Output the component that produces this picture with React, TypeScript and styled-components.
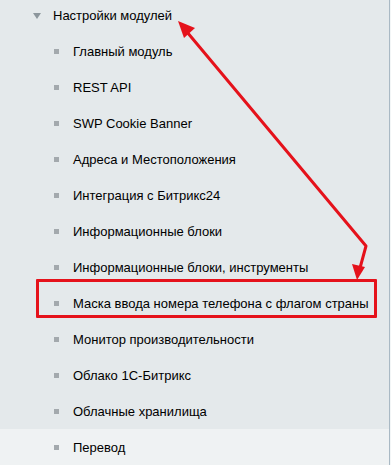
import React from "react";
import styled, { createGlobalStyle, css } from "styled-components";

const GlobalStyle = createGlobalStyle`
  html, body {
    margin: 0;
    padding: 0;
    background: #f3f6f7;
  }
  body {
    font-family: "Liberation Sans", Arial, sans-serif;
  }
`;

const Page = styled.div`
  position: relative;
  width: 391px;
  height: 465px;
  overflow: hidden;
`;

const Panel = styled.div`
  width: 389px;
  height: 465px;
  background: #e4e9eb;
  border-right: 1px solid #a9b9c4;
`;

const Header = styled.div`
  display: flex;
  align-items: center;
  height: 30px;
  padding-left: 33px;
  font-size: 13px;
  color: #000;
`;

const Triangle = styled.span`
  width: 0;
  height: 0;
  border-left: 4px solid transparent;
  border-right: 4px solid transparent;
  border-top: 6px solid #8c969c;
  margin-right: 12px;
  margin-top: 1px;
`;

const List = styled.ul`
  margin: 3px 0 0;
  padding: 0;
  list-style: none;
`;

const Item = styled.li<{ $hover?: boolean; $marked?: boolean }>`
  position: relative;
  display: flex;
  align-items: center;
  height: 36px;
  padding-left: 54px;
  font-size: 13px;
  color: #000;
  white-space: nowrap;
  background: ${(p) => (p.$hover ? "#eff2f3" : "transparent")};

  ${(p) =>
    p.$marked &&
    css`
      &::after {
        content: "";
        position: absolute;
        left: 36px;
        width: 335px;
        top: -6px;
        height: 33px;
        border: 3px solid #e5121b;
        border-radius: 1px;
      }
    `}
`;

const Bullet = styled.span`
  width: 5px;
  height: 5px;
  background: #a3a9ad;
  margin-right: 14px;
  flex-shrink: 0;
`;

const Arrows = styled.svg`
  position: absolute;
  left: 0;
  top: 0;
  pointer-events: none;
`;

const items = [
  "Главный модуль",
  "REST API",
  "SWP Cookie Banner",
  "Адреса и Местоположения",
  "Интеграция с Битрикс24",
  "Информационные блоки",
  "Информационные блоки, инструменты",
  "Маска ввода номера телефона с флагом страны",
  "Монитор производительности",
  "Облако 1С-Битрикс",
  "Облачные хранилища",
  "Перевод",
];

const App = () => (
  <Page>
    <GlobalStyle />
    <Panel>
      <Header>
        <Triangle />
        <span>Настройки модулей</span>
      </Header>
      <List>
        {items.map((item, i) => (
          <Item key={item} $marked={i === 7} $hover={i === items.length - 1}>
            <Bullet />
            <span>{item}</span>
          </Item>
        ))}
      </List>
    </Panel>
    <Arrows width="391" height="465" viewBox="0 0 391 465">
      <g stroke="#e5121b" strokeWidth="3" fill="none" strokeLinecap="round" strokeLinejoin="round">
        <polyline points="187,32 366,246 360,268" />
      </g>
      <g fill="#e5121b">
        <polygon points="178,21 195,28 184,38" />
        <polygon points="357,280 352,264 365,267" />
      </g>
    </Arrows>
  </Page>
);

export default App;
